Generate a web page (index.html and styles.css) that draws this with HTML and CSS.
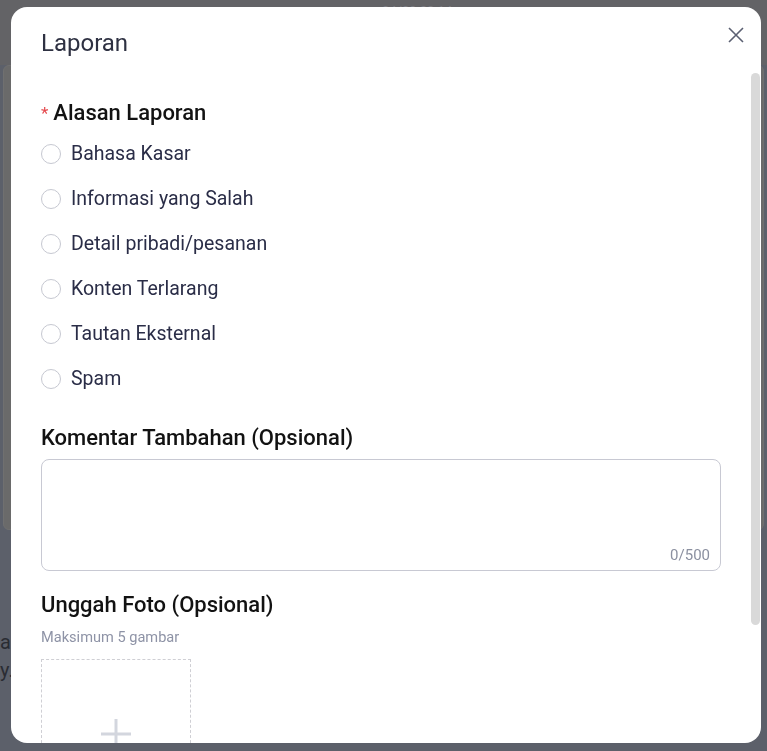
FILE: index.html
```html
<!DOCTYPE html>
<html lang="id">
<head>
  <meta charset="UTF-8">
  <title>Laporan</title>
  <link rel="stylesheet" href="styles.css">
</head>
<body>

  <div class="backdrop">
    <div class="bg-top"><span class="bg-time">04/09 20:14</span></div>
    <div class="bg-card"></div>
    <div class="bg-bottom">
      <p class="bg-text">ad</p>
      <p class="bg-text">y.</p>
    </div>
  </div>

  <div class="modal">
    <div class="modal-header">
      <h2 class="modal-title">Laporan</h2>
      <button class="close-btn" aria-label="Tutup">
        <svg width="16" height="16" viewBox="0 0 16 16">
          <path d="M1 1L15 15M15 1L1 15" stroke="#5b6072" stroke-width="1.6" fill="none"/>
        </svg>
      </button>
    </div>

    <div class="modal-body">
      <div class="field-label"><span class="required">*</span>Alasan Laporan</div>
      <div class="radio-list">
        <label class="radio-row"><input type="radio" name="alasan"><span class="radio-dot"></span>Bahasa Kasar</label>
        <label class="radio-row"><input type="radio" name="alasan"><span class="radio-dot"></span>Informasi yang Salah</label>
        <label class="radio-row"><input type="radio" name="alasan"><span class="radio-dot"></span>Detail pribadi/pesanan</label>
        <label class="radio-row"><input type="radio" name="alasan"><span class="radio-dot"></span>Konten Terlarang</label>
        <label class="radio-row"><input type="radio" name="alasan"><span class="radio-dot"></span>Tautan Eksternal</label>
        <label class="radio-row"><input type="radio" name="alasan"><span class="radio-dot"></span>Spam</label>
      </div>

      <div class="field-label spaced">Komentar Tambahan (Opsional)</div>
      <div class="textarea-box">
        <textarea maxlength="500"></textarea>
        <span class="counter">0/500</span>
      </div>

      <div class="field-label upload-label">Unggah Foto (Opsional)</div>
      <div class="hint">Maksimum 5 gambar</div>
      <div class="upload-box">
        <svg width="34" height="34" viewBox="0 0 34 34">
          <path d="M17 2V32M2 17H32" stroke="#d3d6de" stroke-width="3" fill="none"/>
        </svg>
      </div>
    </div>

    <div class="scroll-thumb"></div>
  </div>

</body>
</html>
```

FILE: styles.css
```css
* {
  box-sizing: border-box;
}
body {
  margin: 0;
  font-family: Roboto, "Noto Sans", Arial, sans-serif;
  background-color: #5c606a;
  overflow: hidden;
}
.backdrop {
  height: 751px;
  display: flex;
  flex-direction: column;
}
.bg-top {
  height: 65px;
  padding-left: 382px;
  background-color: #636366;
}
.bg-time {
  font-size: 13px;
  line-height: 15px;
  color: #7c7c82;
}
.bg-card {
  height: 465px;
  margin: 0 3px;
  background-color: #6a6a6a;
  border: 1px solid #707070;
  border-radius: 6px;
}
.bg-bottom {
  flex: 1;
  padding-top: 100px;
}
.bg-text {
  margin: 0 0 4px;
  font-size: 20px;
  color: #2a2c33;
}

.modal {
  position: fixed;
  top: 7px;
  left: 11px;
  width: 750px;
  height: 736px;
  background-color: #fff;
  border-radius: 16px;
  overflow: hidden;
  display: flex;
  flex-direction: column;
}
.modal-header {
  height: 66px;
  flex-shrink: 0;
  padding: 0 30px;
  display: flex;
  align-items: flex-start;
  justify-content: space-between;
}
.modal-title {
  margin: 22px 0 0;
  font-size: 24px;
  font-weight: 400;
  line-height: 28px;
  color: #2e3142;
}
.close-btn {
  margin: 20px -13px 0 0;
  padding: 0;
  border: none;
  background: none;
  cursor: pointer;
}

.modal-body {
  flex: 1;
  overflow-y: auto;
  scrollbar-width: none;
  padding: 25px 40px 77px 30px;
}
.scroll-thumb {
  position: absolute;
  top: 66px;
  right: 1px;
  width: 9px;
  height: 552px;
  background-color: #d9d9d9;
  border-radius: 5px;
}

.field-label {
  font-size: 22px;
  font-weight: 500;
  line-height: 30px;
  color: #121212;
}
.field-label.spaced {
  margin-top: 22px;
}
.required {
  color: #e5484d;
  font-size: 17px;
  font-weight: 400;
  margin-right: 5px;
  vertical-align: 1px;
}

.radio-list {
  margin-top: 3px;
}
.radio-row {
  height: 45px;
  display: flex;
  align-items: center;
  font-size: 19.5px;
  color: #2a2d47;
  cursor: pointer;
}
.radio-row input {
  display: none;
}
.radio-dot {
  width: 20px;
  height: 20px;
  border: 1px solid #c6c8d1;
  border-radius: 50%;
  margin-right: 10px;
  flex-shrink: 0;
}

.textarea-box {
  position: relative;
  margin-top: 6px;
  height: 112px;
  border: 1px solid #c8c9d3;
  border-radius: 8px;
}
.textarea-box textarea {
  width: 100%;
  height: 100%;
  border: none;
  outline: none;
  resize: none;
  background: transparent;
  padding: 10px 12px;
  font-family: inherit;
  font-size: 16px;
}
.counter {
  position: absolute;
  right: 10px;
  bottom: 6px;
  font-size: 15px;
  color: #8b90a0;
}

.upload-label {
  margin-top: 19px;
}
.hint {
  margin-top: 7px;
  font-size: 14.6px;
  line-height: 20px;
  color: #8e93a6;
}
.upload-box {
  margin-top: 12px;
  width: 150px;
  height: 150px;
  border: 1px dashed #cfcfd4;
  display: flex;
  align-items: center;
  justify-content: center;
}
```
